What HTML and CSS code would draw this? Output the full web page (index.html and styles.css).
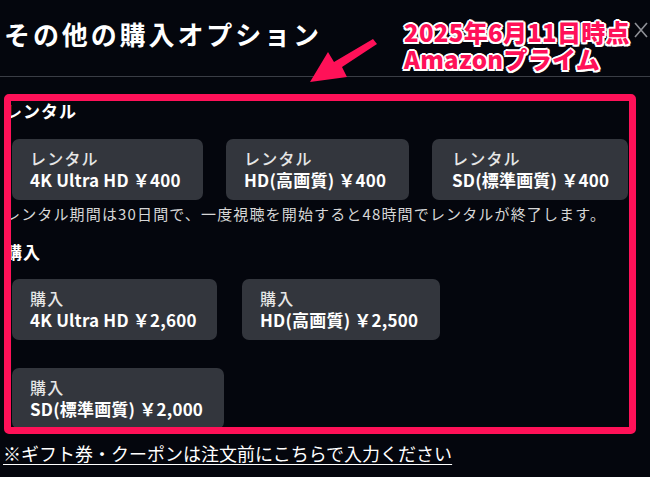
FILE: index.html
```html
<!DOCTYPE html>
<html lang="ja">
<head>
<meta charset="utf-8">
<title>その他の購入オプション</title>
<link rel="stylesheet" href="styles.css">
</head>
<body>
<div class="page">
  <header class="header">
    <h1 class="title">その他の購入オプション</h1>
    <svg class="close" width="14" height="16" viewBox="0 0 14 16" aria-hidden="true">
      <path d="M1 1 L13 15 M13 1 L1 15" stroke="#8e9096" stroke-width="1.6" fill="none"/>
    </svg>
  </header>
  <main class="content">
    <h2 class="section-title">レンタル</h2>
    <div class="options">
      <button class="option option--r4k"><span class="opt-type">レンタル</span><span class="opt-price">4K Ultra HD ￥400</span></button>
      <button class="option option--rhd"><span class="opt-type">レンタル</span><span class="opt-price">HD(高画質) ￥400</span></button>
      <button class="option option--rsd"><span class="opt-type">レンタル</span><span class="opt-price">SD(標準画質) ￥400</span></button>
    </div>
    <p class="note">レンタル期間は30日間で、一度視聴を開始すると48時間でレンタルが終了します。</p>
    <h2 class="section-title section-title--buy">購入</h2>
    <div class="options options--buy">
      <button class="option option--b4k"><span class="opt-type">購入</span><span class="opt-price">4K Ultra HD ￥2,600</span></button>
      <button class="option option--bhd"><span class="opt-type">購入</span><span class="opt-price">HD(高画質) ￥2,500</span></button>
      <button class="option option--bsd"><span class="opt-type">購入</span><span class="opt-price">SD(標準画質) ￥2,000</span></button>
    </div>
    <a class="gift" href="#">※ギフト券・クーポンは注文前にこちらで入力ください</a>
  </main>

  <div class="annot-box"></div>
  <div class="annot-text">2025年6月11日時点<br>Amazonプライム</div>
  <svg class="annot-arrow" width="80" height="50" viewBox="300 36 80 50" aria-hidden="true">
    <polygon points="310,82 328,52 334,62 373,39 377,44 342,67 347,77" fill="#ff1158"/>
  </svg>
</div>
</body>
</html>
```

FILE: styles.css
```css
* { box-sizing: border-box; }

html, body {
  margin: 0;
  padding: 0;
  background: #04060d;
}

body {
  font-family: "Noto Sans CJK JP", "Noto Sans", sans-serif;
  color: #ffffff;
  width: 650px;
  height: 477px;
  overflow: hidden;
}

.page {
  position: relative;
  width: 650px;
  height: 477px;
}

.header {
  display: flex;
  align-items: flex-start;
  height: 77px;
  border-bottom: 1px solid #3a3d45;
}

.title {
  margin: 16px 0 0 4px;
  font-size: 26px;
  line-height: 36px;
  font-weight: 700;
  letter-spacing: 2.9px;
  color: #ffffff;
}

.close {
  margin: 22px 2px 0 auto;
}

.content {
  padding: 22px 0 0 5px;
}

.section-title {
  margin: 0;
  font-size: 17px;
  line-height: 24px;
  font-weight: 700;
  letter-spacing: 1px;
}

.options {
  display: flex;
  flex-wrap: wrap;
  gap: 28px 23px;
  margin: 16px 0 0 7px;
  width: 640px;
}

.options--buy {
  margin-top: 15px;
  gap: 28px 25px;
}

.option {
  display: flex;
  flex-direction: column;
  align-items: flex-start;
  height: 61px;
  padding: 8px 0 9px 18px;
  border: none;
  border-radius: 7px;
  background: #33363d;
  font-family: inherit;
  text-align: left;
  cursor: pointer;
}

.option--r4k { width: 191px; }
.option--rhd { width: 183px; }
.option--rsd { width: 196px; padding-left: 20px; }
.option--b4k { width: 205px; }
.option--bhd { width: 198px; }
.option--bsd { width: 212px; }

.opt-type {
  font-size: 16px;
  line-height: 22px;
  font-weight: 500;
  letter-spacing: 1.2px;
  color: #e6e6e6;
}

.opt-price {
  font-size: 17px;
  line-height: 22px;
  font-weight: 700;
  letter-spacing: 0.2px;
  color: #ffffff;
  white-space: nowrap;
}

.note {
  margin: 3px 0 0 0;
  font-size: 15px;
  line-height: 22px;
  letter-spacing: 1.15px;
  color: #d6d6d6;
}

.section-title--buy {
  margin-top: 15px;
}

.gift {
  display: block;
  margin: 12px 0 0 -2px;
  font-size: 18px;
  line-height: 24px;
  color: #ffffff;
  text-decoration: underline;
  text-underline-offset: 3px;
}

/* annotation overlay */
.annot-box {
  position: absolute;
  left: 4px;
  top: 94px;
  width: 632px;
  height: 340px;
  border: 7px solid #ff1158;
  border-radius: 5px;
}

.annot-text {
  position: absolute;
  left: 404px;
  top: 18px;
  font-size: 24px;
  line-height: 27px;
  font-weight: 900;
  letter-spacing: 0.3px;
  color: #ff1158;
  white-space: nowrap;
  text-shadow:
    2px 0 0 #fff, -2px 0 0 #fff, 0 2px 0 #fff, 0 -2px 0 #fff,
    1.5px 1.5px 0 #fff, -1.5px 1.5px 0 #fff, 1.5px -1.5px 0 #fff, -1.5px -1.5px 0 #fff;
}

.annot-arrow {
  position: absolute;
  left: 300px;
  top: 36px;
}
```
